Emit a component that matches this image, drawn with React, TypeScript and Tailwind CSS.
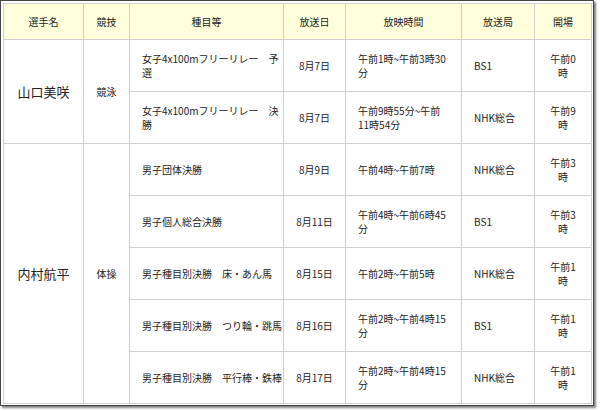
import React from "react";

const font = { fontFamily: '"Noto Sans CJK JP", "Noto Sans", sans-serif' };

type Row = {
  item: React.ReactNode;
  date: string;
  time: React.ReactNode;
  station: string;
  open: React.ReactNode;
};

const swim: Row[] = [
  { item: <>女子4x100mフリーリレー　予<br />選</>, date: "8月7日", time: <>午前1時~午前3時30<br />分</>, station: "BS1", open: <>午前0<br />時</> },
  { item: <>女子4x100mフリーリレー　決<br />勝</>, date: "8月7日", time: <>午前9時55分~午前<br />11時54分</>, station: "NHK総合", open: <>午前9<br />時</> },
];

const gym: Row[] = [
  { item: "男子団体決勝", date: "8月9日", time: "午前4時~午前7時", station: "NHK総合", open: <>午前3<br />時</> },
  { item: "男子個人総合決勝", date: "8月11日", time: <>午前4時~午前6時45<br />分</>, station: "BS1", open: <>午前3<br />時</> },
  { item: "男子種目別決勝　床・あん馬", date: "8月15日", time: "午前2時~午前5時", station: "NHK総合", open: <>午前1<br />時</> },
  { item: "男子種目別決勝　つり輪・跳馬", date: "8月16日", time: <>午前2時~午前4時15<br />分</>, station: "BS1", open: <>午前1<br />時</> },
  { item: "男子種目別決勝　平行棒・鉄棒", date: "8月17日", time: <>午前2時~午前4時15<br />分</>, station: "NHK総合", open: <>午前1<br />時</> },
];

const td = "border border-[#cfcfcf] align-middle p-0";

function Cells({ r }: { r: Row }) {
  return (
    <>
      <td className={`${td} text-left pl-[12px] pr-[4px] whitespace-nowrap`}>{r.item}</td>
      <td className={`${td} text-center`}>{r.date}</td>
      <td className={`${td} text-left pl-[12px] whitespace-nowrap`}>{r.time}</td>
      <td className={`${td} text-left pl-[12px]`}>{r.station}</td>
      <td className={`${td} text-center`}>{r.open}</td>
    </>
  );
}

export default function App() {
  const heads = ["選手名", "競技", "種目等", "放送日", "放映時間", "放送局", "開場"];
  return (
    <div className="w-[600px] h-[411px] bg-white" style={font}>
      <div className="w-[594px] h-[406px] border border-[#444] bg-white p-[2px] shadow-[2px_2px_2px_rgba(0,0,0,0.5)]">
        <table className="table-fixed border-collapse w-[588px] text-[10px] leading-[14px] text-[#222]">
          <colgroup>
            <col className="w-[80px]" />
            <col className="w-[46px]" />
            <col className="w-[154px]" />
            <col className="w-[62px]" />
            <col className="w-[116px]" />
            <col className="w-[73px]" />
            <col className="w-[57px]" />
          </colgroup>
          <thead>
            <tr className="h-[36px] bg-[#ffffdc]">
              {heads.map((h) => (
                <th key={h} className={`${td} font-normal text-center`}>{h}</th>
              ))}
            </tr>
          </thead>
          <tbody>
            {swim.map((r, i) => (
              <tr key={"s" + i} className="h-[52px]">
                {i === 0 && (
                  <>
                    <td rowSpan={2} className={`${td} text-center text-[13px]`}>山口美咲</td>
                    <td rowSpan={2} className={`${td} text-center`}>競泳</td>
                  </>
                )}
                <Cells r={r} />
              </tr>
            ))}
            {gym.map((r, i) => (
              <tr key={"g" + i} className="h-[52px]">
                {i === 0 && (
                  <>
                    <td rowSpan={5} className={`${td} text-center text-[13px]`}>内村航平</td>
                    <td rowSpan={5} className={`${td} text-center`}>体操</td>
                  </>
                )}
                <Cells r={r} />
              </tr>
            ))}
          </tbody>
        </table>
      </div>
    </div>
  );
}
